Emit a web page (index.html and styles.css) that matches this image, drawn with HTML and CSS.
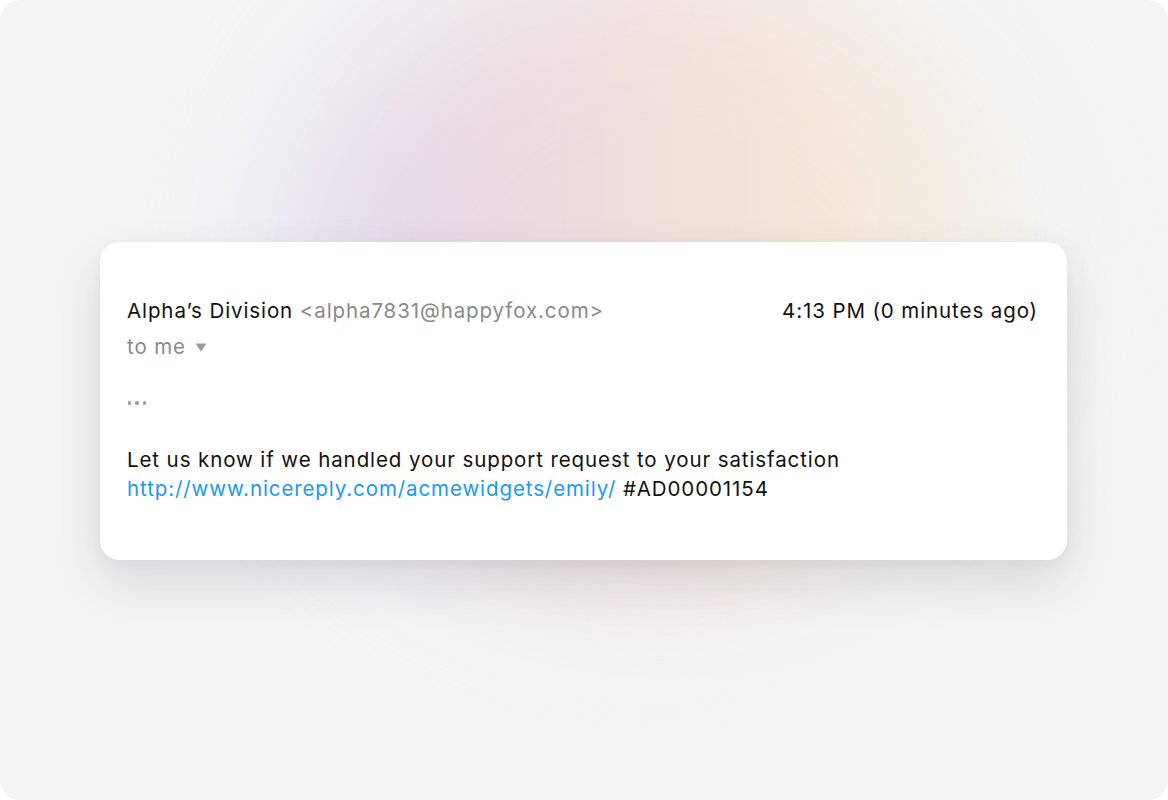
FILE: index.html
```html
<!DOCTYPE html>
<html>
<head>
<meta charset="utf-8">
<link rel="stylesheet" href="styles.css">
</head>
<body>
<div class="frame">
  <div class="blob"></div>
  <div class="card">
    <div class="head">
      <div class="from">
        <span class="name">Alpha’s Division</span>
        <span class="addr">&lt;alpha7831@happyfox.com&gt;</span>
      </div>
      <div class="time">4:13 PM (0 minutes ago)</div>
    </div>
    <div class="to">to me <svg class="caret" width="12" height="9" viewBox="0 0 12 9"><path d="M0.5 0.5 H11.5 L6 8.5 Z" fill="#9a9a9a"/></svg></div>
    <div class="dots"><span></span><span></span><span></span></div>
    <p class="body">Let us know if we handled your support request to your satisfaction<br><a class="link" href="#">http://www.nicereply.com/acmewidgets/emily/</a> #AD00001154</p>
  </div>
</div>
</body>
</html>
```
FILE: styles.css
```css
html, body {
  margin: 0;
  padding: 0;
  background: #ffffff;
}
.frame {
  position: relative;
  width: 1168px;
  height: 800px;
  box-sizing: border-box;
  padding-top: 242px;
  border-radius: 20px;
  background: #f4f4f6;
  overflow: hidden;
  font-family: Inter, "Noto Sans", sans-serif;
  font-size: 20.5px;
  letter-spacing: 0.9px;
}
.blob {
  position: absolute;
  left: 300px;
  top: -40px;
  width: 720px;
  height: 620px;
  border-radius: 50%;
  background: linear-gradient(90deg, #d9cfea 0%, #e8d6e2 25%, #f2dcd6 50%, #f5e6d4 72%, #f3efe6 100%);
  filter: blur(75px);
  opacity: 0.9;
}
.card {
  position: relative;
  width: 967px;
  margin: 0 auto 0 100px;
  box-sizing: border-box;
  padding: 57px 29px 57px 27px;
  background: #ffffff;
  border-radius: 20px;
  box-shadow: 0 22px 50px rgba(40, 40, 60, 0.13), 0 4px 12px rgba(40, 40, 60, 0.04);
}
.head {
  display: flex;
  justify-content: space-between;
  align-items: center;
  line-height: 24px;
}
.name { color: #111111; }
.addr { color: #8a8a8a; }
.time { color: #111111; }
.to {
  margin-top: 12px;
  display: flex;
  align-items: center;
  gap: 9px;
  line-height: 24px;
  color: #8a8a8a;
}
.caret { margin-top: 1px; }
.dots {
  display: flex;
  gap: 4px;
  margin-top: 42px;
  height: 4px;
  align-items: center;
  padding-left: 1px;
}
.dots span {
  width: 3.4px;
  height: 3.4px;
  border-radius: 50%;
  background: #9a9a9a;
}
.body {
  margin: 40px 0 0 0;
  line-height: 29px;
  color: #111111;
}
.link {
  color: #1a9af0;
  text-decoration: none;
}
```
